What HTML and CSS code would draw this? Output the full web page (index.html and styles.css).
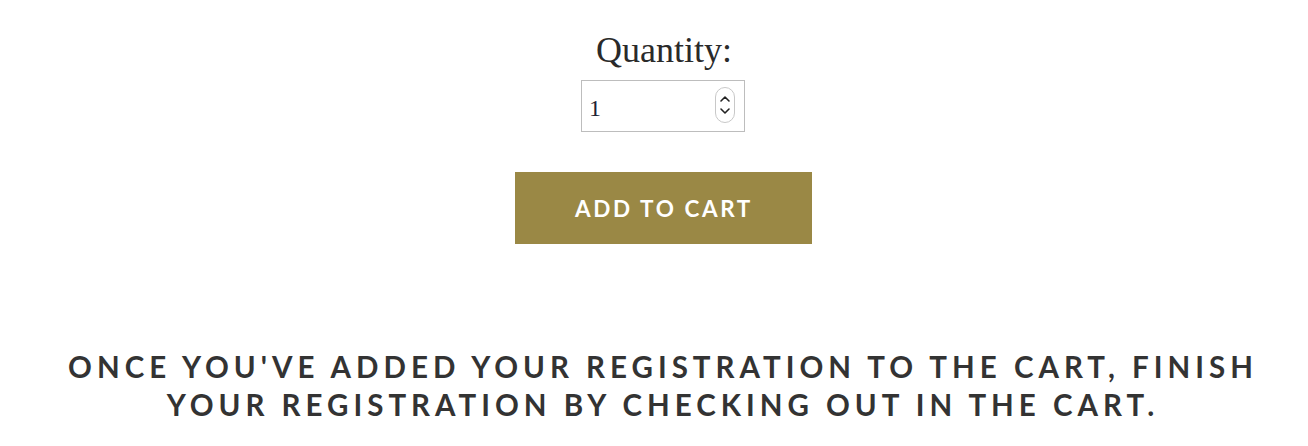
FILE: index.html
```html
<!DOCTYPE html>
<html>
<head>
<meta charset="utf-8">
<link rel="stylesheet" href="styles.css">
</head>
<body>
<main class="page">
  <form class="cart-form">
    <label class="qty-label">Quantity:</label>
    <div class="qty-input">
      <span class="qty-value">1</span>
      <span class="spinner">
        <svg width="20" height="36" viewBox="0 0 20 36">
          <rect x="0.5" y="0.5" width="19" height="35" rx="9.5" fill="#fff" stroke="#c8c8c8"/>
          <path d="M6 14 L10 10 L14 14" fill="none" stroke="#222" stroke-width="1.6" stroke-linecap="round" stroke-linejoin="round"/>
          <path d="M6 22 L10 26 L14 22" fill="none" stroke="#222" stroke-width="1.6" stroke-linecap="round" stroke-linejoin="round"/>
        </svg>
      </span>
    </div>
    <button type="button" class="add-btn">ADD TO CART</button>
  </form>
  <p class="notice">ONCE YOU'VE ADDED YOUR REGISTRATION TO THE CART, FINISH YOUR REGISTRATION BY CHECKING OUT IN THE CART.</p>
</main>
</body>
</html>
```

FILE: styles.css
```css
html, body {
  margin: 0;
  padding: 0;
  background: #fff;
}
.page {
  display: flex;
  flex-direction: column;
  align-items: center;
  padding: 28px 0 0 18px;
}
.cart-form {
  display: flex;
  flex-direction: column;
  align-items: center;
}
.qty-label {
  font-family: "Liberation Serif", serif;
  font-size: 36px;
  line-height: 44px;
  color: #2a2a2a;
  margin-left: 2px;
}
.qty-input {
  box-sizing: border-box;
  width: 164px;
  height: 52px;
  border: 1px solid #bdbdbd;
  margin-top: 8px;
  display: flex;
  align-items: center;
  justify-content: space-between;
  padding: 0 9px 0 7px;
}
.qty-value {
  font-family: "Liberation Serif", serif;
  font-size: 24px;
  color: #1d2233;
  margin-top: 4px;
}
.spinner {
  display: flex;
  margin-top: -2px;
}
.add-btn {
  margin-top: 40px;
  width: 297px;
  height: 72px;
  border: none;
  background: #9a8845;
  color: #fff;
  font-family: "Lato", sans-serif;
  font-weight: 700;
  font-size: 22.5px;
  letter-spacing: 2.6px;
  padding: 0 0 0 2px;
}
.notice {
  max-width: 1200px;
  margin: 104px 0 0;
  text-align: center;
  font-family: "Lato", sans-serif;
  font-weight: 700;
  font-size: 29.5px;
  line-height: 38px;
  letter-spacing: 5px;
  color: #333;
}
```
